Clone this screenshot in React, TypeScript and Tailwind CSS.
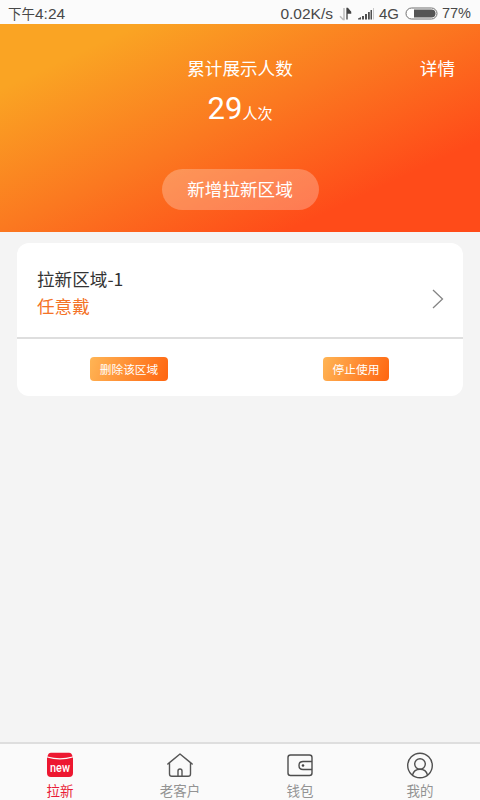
import React from "react";

const PRIMARY_FONT = "font-['Roboto','Noto_Sans_CJK_SC',sans-serif]";

function StatusBar() {
  return (
    <header className="flex h-6 items-center bg-[#fbfbfb] pl-2 pr-[9px] pt-[3px] font-['Liberation_Sans','Noto_Sans_CJK_SC',sans-serif] text-[15.500px] leading-[21px] text-[#484848]">
      <span className="whitespace-nowrap"><span className="text-[13.5px]">下午</span>4:24</span>
      <span className="ml-auto whitespace-nowrap">0.02K/s</span>
      <svg className="ml-[6px] shrink-0" width="13" height="14" viewBox="0 0 13 14" fill="none">
        <path d="M5 1v11.500H4.200L1 9.300" stroke="#bdbdbd" strokeWidth="1.500" />
        <path d="M8 12.500V1.500h.6l3 3.500v1H8" fill="#444" stroke="#444" strokeWidth="1.300" />
      </svg>
      <svg className="ml-[6px] shrink-0" width="17" height="13" viewBox="0 0 17 13">
        <path d="M0 12.500v-1l3-1.500v2.500zM4 9h2v3.500H4zM7 7h2v5.500H7zM10 5h1.800v7.500H10zM12.500 3h1.500v9.500h-1.500z" fill="#505050" />
        <path d="M15.500 1v11.500" stroke="#cacaca" />
      </svg>
      <span className="ml-[4px] whitespace-nowrap text-[15px]">4G</span>
      <svg className="ml-[6px] shrink-0" width="33" height="13" viewBox="0 0 33 13">
        <rect x="1" y="1" width="31" height="11" rx="5.5" fill="#fff" stroke="#6f6f6f" />
        <path d="M9 2.500h17.500a4 4 0 0 1 0 8H9z" fill="#555" />
      </svg>
      <span className="ml-[4px] whitespace-nowrap text-[14.500px]">77%</span>
    </header>
  );
}

function Summary() {
  return (
    <section className="flex h-52 flex-col items-center bg-[linear-gradient(155deg,#faa423_15%,#fb7820_48%,#ff4b19_79%)] text-white">
      <div className="mt-[32px] grid h-[26px] w-full grid-cols-3 items-center text-[17.600px] leading-[26px]">
        <span />
        <h1 className="whitespace-nowrap text-center font-normal">累计展示人数</h1>
        <span className="pr-[25px] text-right">详情</span>
      </div>
      <p className="mt-[7px] h-[40px] whitespace-nowrap leading-[40px]">
        <span className="text-[31px]">29</span>
        <span className="text-[15px]">人次</span>
      </p>
      <button className="mt-[40px] h-[41px] w-[157px] rounded-full bg-white/25 pt-[2px] text-[17.600px]">新增拉新区域</button>
    </section>
  );
}

function AreaCard() {
  return (
    <article className="mx-[17px] mt-[11px] h-[153px] overflow-hidden rounded-[12px] bg-white">
      <div className="flex h-[96px] items-center border-b-2 border-[#dedede] pl-5 pr-[19px]">
        <div className="pt-[6px] text-[17.600px] leading-[27px]">
          <h2 className="text-[#333]">拉新区域<span className="font-['Noto_Sans_CJK_SC']">-1</span></h2>
          <p className="text-[#f47327]">任意戴</p>
        </div>
        <svg className="ml-auto mt-[18px]" width="12" height="20" viewBox="0 0 12 20" fill="none">
          <path d="m1 1 9.500 9L1 19" stroke="#858585" strokeWidth="1.300" />
        </svg>
      </div>
      <div className="flex h-[57px] items-start justify-between pl-[73px] pr-[74px] pt-[18px]">
        <button className="h-6 w-[78px] whitespace-nowrap rounded-[4px] bg-[linear-gradient(110deg,#ffb555,#ff6510)] pt-px text-[11.700px] leading-6 text-white">删除该区域</button>
        <button className="h-6 w-[66px] whitespace-nowrap rounded-[4px] bg-[linear-gradient(110deg,#ffb555,#ff6510)] pt-px text-[11.700px] leading-6 text-white">停止使用</button>
      </div>
    </article>
  );
}

function NewIcon() {
  return (
    <svg width="28" height="28" viewBox="0 0 28 28">
      <path d="M1.500 5.500Q2 1.700 5 1.700h18q3 0 3.500 3.800Q14 9 1.500 5.500" fill="#ed1730" />
      <path d="M1 6.500Q14 10.300 27 6.500V22q0 4-4 4H5q-4 0-4-4z" fill="#ed1730" />
      <text transform="translate(14 20.500) scale(.87 1)" textAnchor="middle" fill="white" fontFamily="Roboto, sans-serif" fontWeight="500" fontSize="12.500">new</text>
    </svg>
  );
}

function HomeIcon() {
  return (
    <svg width="28" height="28" viewBox="0 0 28 28" fill="none" stroke="#555" strokeWidth="1.400" strokeLinejoin="round" strokeLinecap="round">
      <path d="m1.800 13 1.700-1.400L14 3l10.500 8.600 1.700 1.400M3.500 12v11q0 2.300 2.300 2.300h16.400q2.300 0 2.300-2.300V12M12 25v-5q0-2 2-2t2 2v5" />
    </svg>
  );
}

function WalletIcon() {
  return (
    <svg width="28" height="28" viewBox="0 0 28 28" fill="none" stroke="#4d4d4d" strokeWidth="1.400">
      <rect x="2" y="4" width="24" height="20.500" rx="2.500" />
      <path d="M26 10.500h-9q-4 0-4 4t4 4h9" />
      <circle cx="17" cy="14.500" r="1.300" fill="#444" stroke="none" />
    </svg>
  );
}

function UserIcon() {
  return (
    <svg width="28" height="28" viewBox="0 0 28 28" fill="none" stroke="#505050" strokeWidth="1.400">
      <circle cx="14" cy="14.500" r="12.300" />
      <circle cx="14" cy="13" r="5.300" />
      <path d="M6.500 24q1.500-5.700 7.500-5.700t7.500 5.700" />
    </svg>
  );
}

const tabs = [
  { label: "拉新", Icon: NewIcon, color: "text-[#e91c36]" },
  { label: "老客户", Icon: HomeIcon, color: "text-[#939393]" },
  { label: "钱包", Icon: WalletIcon, color: "text-[#939393]" },
  { label: "我的", Icon: UserIcon, color: "text-[#939393]" },
];

export default function App() {
  return (
    <main className={`flex h-[800px] w-[480px] flex-col overflow-hidden bg-[#f4f4f4] ${PRIMARY_FONT}`}>
      <StatusBar />
      <Summary />
      <AreaCard />
      <nav className="mt-auto grid h-[58px] grid-cols-4 border-t-2 border-[#dedede] bg-[#fafafa]">
        {tabs.map(({ label, Icon, color }) => (
          <div key={label} className={`flex flex-col items-center pt-[7px] ${color}`}>
            <Icon />
            <span className="mt-[3px] text-[13.500px] leading-[18px]">{label}</span>
          </div>
        ))}
      </nav>
    </main>
  );
}
